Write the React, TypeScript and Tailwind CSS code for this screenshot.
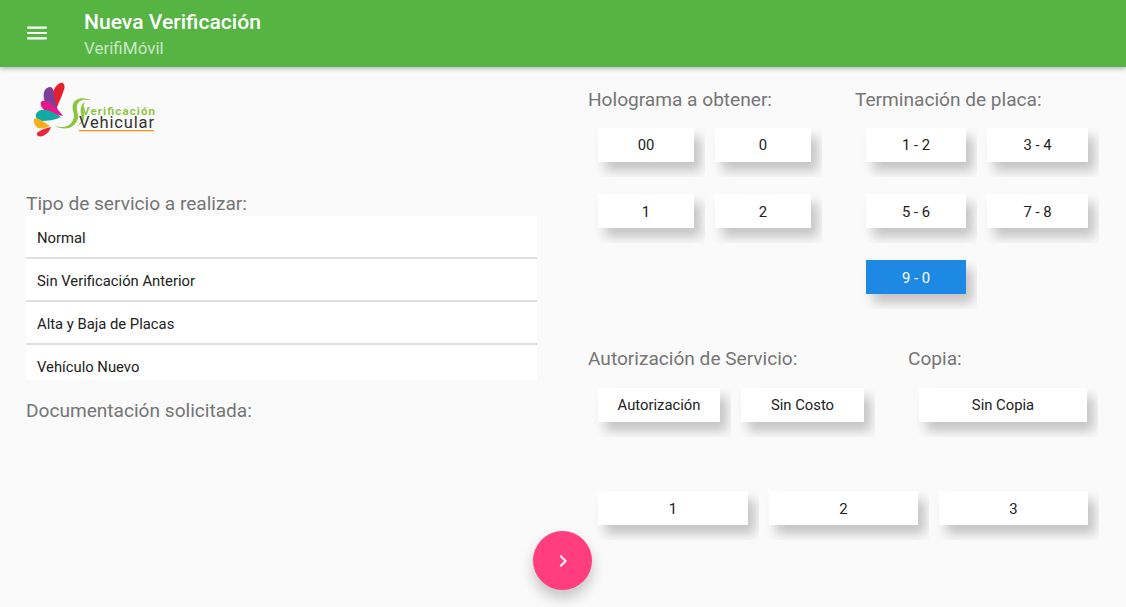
import React from 'react';

const font = { fontFamily: 'Roboto, sans-serif' };

// boton plano con sombra recortada por su contenedor, como en la captura
const Btn: React.FC<{ label: string; w: string; active?: boolean; textPad?: string }> = ({ label, w, active, textPad = 'pt-px' }) => (
    <div className="overflow-hidden pl-[10px] pr-[11px] pt-[6px] pb-[15px] -ml-[10px] -mr-[11px] -mt-[6px] -mb-[15px]">
        <button
            className={`${w} ${textPad} h-[34px] flex items-center justify-center text-[14.8px] shadow-[7px_9px_12px_rgba(0,0,0,0.22)] ${
                active ? 'bg-[#1e88e5] text-white' : 'bg-white text-[#212121]'
            }`}
        >
            {label}
        </button>
    </div>
);

const Label: React.FC<{ text: string; className?: string }> = ({ text, className = '' }) => (
    <div className={`text-[19.1px] leading-[24px] text-[#757575] ${className}`}>{text}</div>
);

const Logo = () => (
    <svg width="124" height="58" viewBox="0 0 124 58" className="block">
        {/* plumas */}
        <path d="M27 1c3-1 5 1 4.500 5C30 12 26 20 22.500 29c-3-4-4-9-3.500-15C20 8 23 3 27 1Z" fill="#e5202e" />
        <path d="M14 6c3-2 6-1 6.500 3 .5 7 2 14 6 23-7-3-14-8-15.500-15-1-5 0-9 3-11Z" fill="#7b3f98" />
        <path d="M8 20c2-2 5-1 7 0 6 3 11 8 15 14-8-1-15-3-20-7-2-2-3-5-2-7Z" fill="#e6178c" />
        <path d="M3 32c2-4 6-5 10-4 5 1 11 4 15 7-6 3-14 4-20 4-4-1-6-4-5-7Z" fill="#11a9a4" />
        <path d="M1 37c2-1 5 0 7 1 3 2 6 4 9 6-4 2-9 3-12 2-3-2-5-6-4-9Z" fill="#f9ae1c" />
        <path d="M4 51c3-3 9-5 14-6-1 4-4 7-8 9-4 1-7 0-6-3Z" fill="#e5293a" />
        {/* ave */}
        <path d="M20 43c9 4 17 2 20-5 3-6-2-10 0-16 2-5 8-7 14-5l4 1-4 0c-5-1-9 1-10 6-1 5 3 10 0 15-4 8-14 10-24 4Z" fill="#8cc63f" />
        <path d="M43 44c5-2 7-6 5-12-1-5 0-10 4-12-2 4-2 8-1 12 1 6-2 11-8 12Z" fill="#8cc63f" />
        <text x="49" y="33" fontSize="11.500" fontWeight="700" fill="#8cc63f" textLength="73" lengthAdjust="spacing">Verificación</text>
        <text x="46" y="46" fontSize="16.500" fill="#333333" textLength="75" lengthAdjust="spacing">Vehicular</text>
        <rect x="46" y="48" width="75" height="1.300" fill="#f7941d" />
    </svg>
);

export default function App() {
    return (
        <div className="relative h-[607px] w-[1126px] overflow-hidden bg-[#fafafa]" style={font}>
            {/* Barra superior */}
            <header className="relative z-10 h-[67px] bg-[#55b442] flex items-center shadow-[0_2px_4px_rgba(0,0,0,0.25)]">
                <svg width="26" height="26" viewBox="0 0 24 24" className="ml-[24px] -mt-[1px] shrink-0" fill="#ffffff">
                    <path d="M3 18h18v-2H3v2zm0-5h18v-2H3v2zm0-7v2h18V6H3z" />
                </svg>
                <div className="ml-[34px]">
                    <div className="text-[21.1px] leading-[26px] font-medium text-white">Nueva Verificación</div>
                    <div className="text-[17px] leading-[20px] mt-[3px] text-white/70">VerifiMóvil</div>
                </div>
            </header>

            <main className="flex">
                {/* Columna izquierda */}
                <section className="ml-[26px] w-[511px] shrink-0">
                    <div className="mt-[15px] ml-[7px]">
                        <Logo />
                    </div>
                    <Label text="Tipo de servicio a realizar:" className="mt-[52px]" />
                    <ul className="h-[164px] overflow-hidden bg-white text-[14.8px] text-[#212121]">
                        <li className="h-[43px] pl-[11px] pt-[3px] flex items-center border-b-2 border-[#e0e0e0]">Normal</li>
                        <li className="h-[43px] pl-[11px] pt-[3px] flex items-center border-b-2 border-[#e0e0e0]">Sin Verificación Anterior</li>
                        <li className="h-[43px] pl-[11px] pt-[3px] flex items-center border-b-2 border-[#e0e0e0]">Alta y Baja de Placas</li>
                        <li className="h-[43px] pl-[11px] pt-px flex items-center">Vehículo Nuevo</li>
                    </ul>
                    <Label text="Documentación solicitada:" className="mt-[19px]" />
                </section>

                {/* Columna derecha */}
                <section className="ml-[51px] flex-1 pt-[21px]">
                    <div className="flex">
                        <div className="w-[267px]">
                            <Label text="Holograma a obtener:" />
                            <div className="mt-[16px] ml-[10px] grid grid-cols-[96px_96px] gap-x-[21px] gap-y-[32px]">
                                <Btn label="00" w="w-[96px]" />
                                <Btn label="0" w="w-[96px]" />
                                <Btn label="1" w="w-[96px]" textPad="pt-[3px]" />
                                <Btn label="2" w="w-[96px]" textPad="pt-[3px]" />
                            </div>
                        </div>
                        <div>
                            <Label text="Terminación de placa:" />
                            <div className="mt-[16px] ml-[11px] grid grid-cols-[100px_101px] gap-x-[21px] gap-y-[32px]">
                                <Btn label="1 - 2" w="w-[100px]" />
                                <Btn label="3 - 4" w="w-[101px]" />
                                <Btn label="5 - 6" w="w-[100px]" textPad="pt-[3px]" />
                                <Btn label="7 - 8" w="w-[101px]" textPad="pt-[3px]" />
                                <Btn label="9 - 0" w="w-[100px]" textPad="pt-[3px]" active />
                            </div>
                        </div>
                    </div>

                    <div className="flex mt-[53px]">
                        <div className="w-[320px]">
                            <Label text="Autorización de Servicio:" />
                            <div className="mt-[17px] ml-[10px] flex gap-[21px]">
                                <Btn label="Autorización" w="w-[122px]" />
                                <Btn label="Sin Costo" w="w-[123px]" />
                            </div>
                        </div>
                        <div>
                            <Label text="Copia:" />
                            <div className="mt-[17px] ml-[11px]">
                                <Btn label="Sin Copia" w="w-[168px]" />
                            </div>
                        </div>
                    </div>

                    <div className="flex mt-[69px] ml-[10px] gap-[21px]">
                        <Btn label="1" w="w-[150px]" textPad="pt-[3px]" />
                        <Btn label="2" w="w-[149px]" textPad="pt-[3px]" />
                        <Btn label="3" w="w-[149px]" textPad="pt-[3px]" />
                    </div>
                </section>
            </main>

            {/* Boton flotante */}
            <button className="absolute left-[533px] top-[531px] w-[59px] h-[59px] rounded-full bg-[#ff3d7f] flex items-center justify-center shadow-[0_8px_14px_rgba(0,0,0,0.22)]">
                <svg width="24" height="24" viewBox="0 0 24 24" fill="#ffffff">
                    <path d="M10 6 8.590 7.410 13.170 12l-4.580 4.590L10 18l6-6z" />
                </svg>
            </button>
        </div>
    );
}
